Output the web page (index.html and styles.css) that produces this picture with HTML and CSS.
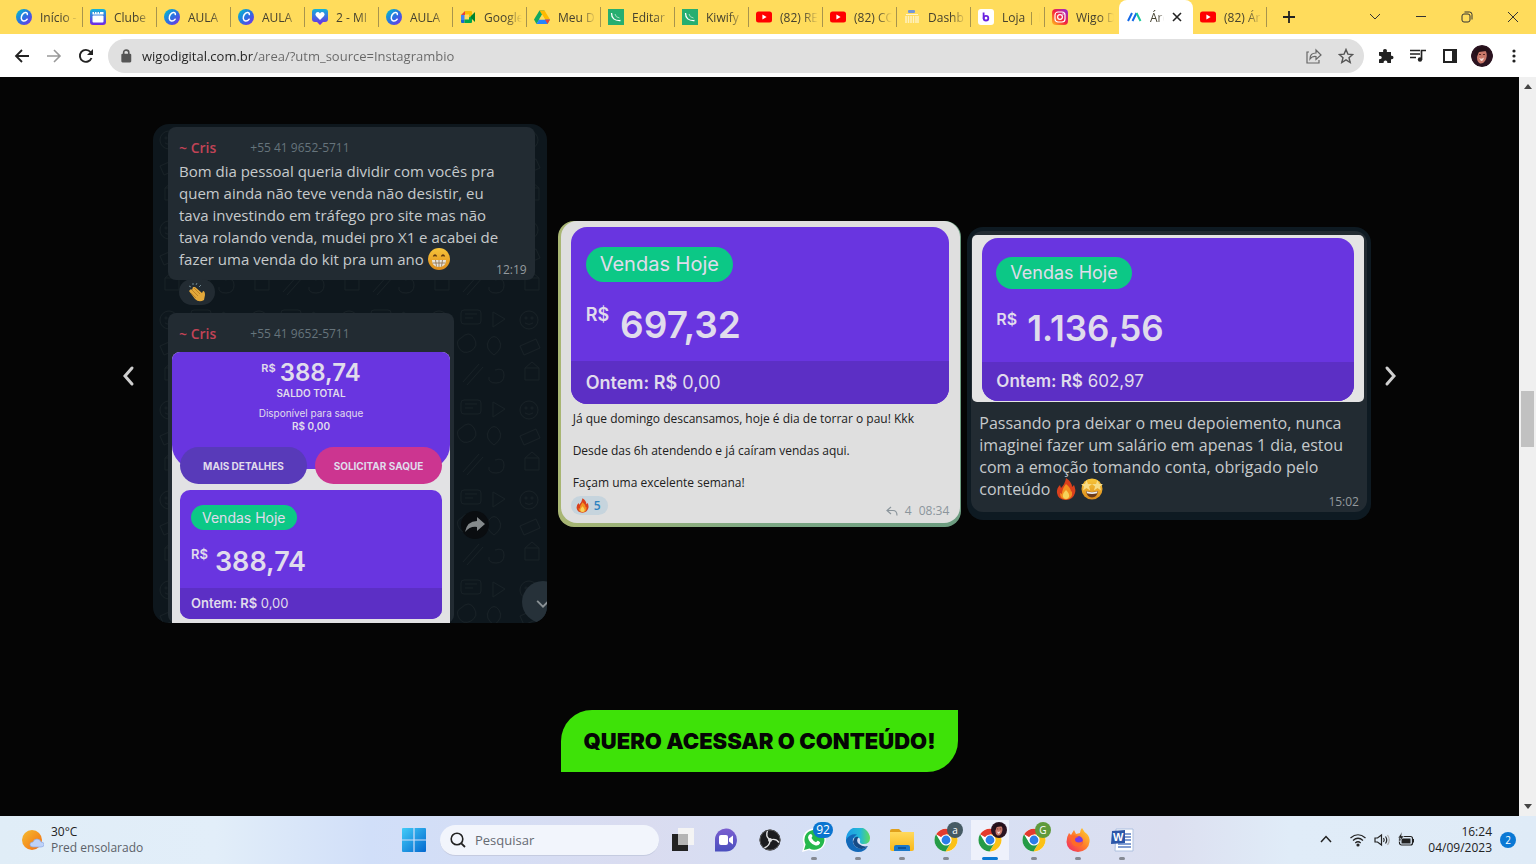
FILE: index.html
```html
<!DOCTYPE html>
<html lang="pt-BR">
<head>
	<meta charset="UTF-8">
	<meta name="viewport" content="width=device-width, initial-scale=1.0">
	<title>Área</title>
	<link rel="stylesheet" href="styles.css">
</head>
<body>
	<!-- Icons -->
	<svg class="sprite" width="0" height="0" aria-hidden="true">
		<defs>
			<linearGradient id="g-canva" x1="0" y1="0" x2="1" y2="1"><stop offset="0" stop-color="#00c4cc"/><stop offset=".5" stop-color="#2a72e0"/><stop offset="1" stop-color="#7d2ae8"/></linearGradient>
			<linearGradient id="g-canva2" x1="0" y1="0" x2="0" y2="1"><stop offset="0" stop-color="#12b5d8"/><stop offset="1" stop-color="#7326e6"/></linearGradient>
			<linearGradient id="g-insta" x1="1" y1="0" x2="0" y2="1"><stop offset="0" stop-color="#8a2bea"/><stop offset=".5" stop-color="#f5203c"/><stop offset="1" stop-color="#ffc11a"/></linearGradient>
			<linearGradient id="g-win" x1="0" y1="0" x2="1" y2="1"><stop offset="0" stop-color="#41ccf8"/><stop offset="1" stop-color="#0468cf"/></linearGradient>
			<linearGradient id="g-edge" x1="0" y1="0" x2="1" y2="0"><stop offset="0" stop-color="#1c9be8"/><stop offset=".6" stop-color="#25b9d6"/><stop offset="1" stop-color="#5fdc5a"/></linearGradient>
			<linearGradient id="g-fox" x1="1" y1="0" x2="0" y2="1"><stop offset="0" stop-color="#ffdf2e"/><stop offset=".5" stop-color="#ff7b2b"/><stop offset="1" stop-color="#f0206a"/></linearGradient>
			<linearGradient id="g-sun" x1="0" y1="0" x2="1" y2="1"><stop offset="0" stop-color="#f5bd30"/><stop offset="1" stop-color="#f36b12"/></linearGradient>
			<linearGradient id="g-face" x1="0" y1="0" x2="0" y2="1"><stop offset="0" stop-color="#f7c53a"/><stop offset="1" stop-color="#dd8c1c"/></linearGradient>
			<linearGradient id="g-meet" x1="0" y1="0" x2="0" y2="1"><stop offset="0" stop-color="#7b5fd0"/><stop offset="1" stop-color="#4a4fbe"/></linearGradient>
			<linearGradient id="g-folder" x1="0" y1="0" x2="0" y2="1"><stop offset="0" stop-color="#ffd95c"/><stop offset="1" stop-color="#f9b81a"/></linearGradient>
			<pattern id="doodles" width="90" height="90" patternUnits="userSpaceOnUse">
				<g fill="none" stroke="#182126" stroke-width="1">
					<circle cx="16" cy="16" r="9"/><circle cx="13" cy="14" r="1"/><circle cx="19" cy="14" r="1"/><path d="M12 19q4 3 8 0"/>
					<rect x="38" y="6" width="20" height="14" rx="3"/><path d="M42 10h12M42 14h8"/>
					<path d="M70 8l12 7-12 8zM7 42l16-7 4 9-16 7zM38 34q8-8 13 0t-3 13q-8 4-12-3t2-10M66 36q5-7 10 0 5 8-5 15-10-7-5-15M12 64h14v12H12zM12 64l7-6 7 6M40 78l16-18M44 81l16-18M72 66q9-3 9 5t-8 8-7-6"/>
				</g>
			</pattern>
		</defs>
		<symbol id="i-canva" viewBox="0 0 16 16"><circle cx="8" cy="8" r="8" fill="url(#g-canva)"/><path d="M11.300 5.600c.3-1.500-.6-2.300-1.900-2.100-2.600.4-4.600 3.500-4.100 6.200.5 2.700 3.600 3.300 5.800.5" fill="none" stroke="#fff" stroke-width="1.500" stroke-linecap="round"/></symbol>
		<symbol id="i-calendar" viewBox="0 0 16 16"><rect width="16" height="16" rx="3" fill="url(#g-canva2)"/><rect x="2.500" y="6.500" width="11" height="7" rx="1" fill="#fff"/><path d="M2.500 3h11v2.500h-11z" fill="#fff"/><path d="M4.500 3v1.500M7 3v1.500M9.500 3v1.500" stroke="#2390d8" stroke-width="1"/></symbol>
		<symbol id="i-heart" viewBox="0 0 16 16"><path d="M3 0h10q3 0 3 3v7q0 3-3 3h-2l-3 3-3-3H3q-3 0-3-3V3q0-3 3-3z" fill="url(#g-canva2)"/><path d="M8 11L4 7q-1.500-2 .3-3.500Q6.500 2.200 8 4.400 9.500 2.200 11.700 3.500 13.500 5 12 7z" fill="#fff"/></symbol>
		<symbol id="i-meet" viewBox="0 0 16 16"><path d="M1 6l4-4v4z" fill="#ea4335"/><path d="M5 2h6v3.500H5z" fill="#fbbc04"/><path d="M1 6h3.500v5H1z" fill="#4285f4"/><path d="M1 11h3.500v3H2q-1 0-1-1z" fill="#1967d2"/><path d="M4.500 10.500H9V8l3-2.500V13q0 1-1 1H4.500z" fill="#00a74a"/><path d="M11 2q1 0 1 1v3.500l-3 2V5.500L11 2z" fill="#fbbc04"/><path d="M11 7l4-4v10l-4-4z" fill="#00832d"/></symbol>
		<symbol id="i-drive" viewBox="0 0 16 16"><path d="M5.500 1.500h5L6 9.500 2.500 15 0 10.500z" fill="#11a861"/><path d="M5.500 1.500h5l5.500 9h-5z" fill="#ffba00"/><path d="M5 10.500h11L13.500 15h-11z" fill="#2684fc"/><path d="M16 10.500L13.500 15 11 10.500z" fill="#ea4335"/><path d="M8 5.500l3 5H5z" fill="#ffdc5c"/></symbol>
		<symbol id="i-kiwify" viewBox="0 0 16 16"><path d="M0 0h16v16H0z" fill="#27ae70"/><path d="M3.500 4q0 8 9 7.500" fill="none" stroke="#fff" stroke-width="1.300"/><path d="M7 5q.5 3.500 4.500 4" fill="none" stroke="#a5dfc3"/></symbol>
		<symbol id="i-youtube" viewBox="0 0 16 16"><rect y="2.500" width="16" height="11" rx="2.500" fill="#f00"/><path d="M6.400 5.600v4.800L10.600 8z" fill="#fff"/></symbol>
		<symbol id="i-dash" viewBox="0 0 16 16"><rect x="4" y="1" width="7" height="3" rx="1" fill="#7396d8"/><path d="M2 5h12v1H2z" fill="#fff4d0"/><path d="M2 7v7M4.500 7v7M7 7v7M9.500 7v7M12 7v7M14 7v7" stroke="#fff2c0" stroke-width="1.500"/></symbol>
		<symbol id="i-loja" viewBox="0 0 16 16"><rect width="16" height="16" rx="3" fill="#fff"/><path d="M5.600 3.500v6.300" stroke="#6a22e0" stroke-width="1.800"/><circle cx="8" cy="9.200" r="2.300" fill="none" stroke="#6a22e0" stroke-width="1.800"/></symbol>
		<symbol id="i-insta" viewBox="0 0 16 16"><rect width="16" height="16" rx="4" fill="url(#g-insta)"/><g fill="none" stroke="#fff" stroke-width="1.200"><rect x="3" y="3" width="10" height="10" rx="3"/><circle cx="8" cy="8" r="2.400"/></g><circle cx="11" cy="5" r=".7" fill="#fff"/></symbol>
		<symbol id="i-wigo" viewBox="0 0 16 16"><path d="M2 12l4-8M6.500 12l4-8" stroke="#1268e8" stroke-width="2"/><path d="M10.500 4l4 8" stroke="#18c99a" stroke-width="2"/></symbol>
		<symbol id="i-face" viewBox="0 0 22 22"><circle cx="11" cy="11" r="11" fill="#2b1320"/><path d="M7 7q4-4 8-.5 2 5-1 9.500-2 3-5 2.500-3-1.500-3-6z" fill="#c9786a"/><path d="M3 8q3-7 10-6 5 1 6 7l-4-3-7 1-2 4z" fill="#241018"/><path d="M8 9.500h2M12 9.500h2" stroke="#5a2a26"/><path d="M8 13q3 1.500 5-.5-1 4-3 3.500z" fill="#f4dcd8"/></symbol>
		<symbol id="i-chrome" viewBox="0 0 24 24"><circle cx="12" cy="12" r="11.500" fill="#fff"/><path d="M12 12L2.100 6.300A11.500 11.500 0 0 1 22 6.500H12z" fill="#e33b2e"/><path d="M12 6.500h10A11.500 11.500 0 0 1 11.500 23.500L17 14.500z" fill="#fbc116"/><path d="M2 6.300A11.500 11.500 0 0 0 11.500 23.500L16.600 15 7.300 15z" fill="#259b47"/><circle cx="12" cy="12" r="5.600" fill="#fff"/><circle cx="12" cy="12" r="4.400" fill="#2b7de9"/></symbol>
		<symbol id="i-fire" viewBox="0 0 20 22"><path d="M10 0q6 4 6 9l2-2q2 5 1 8-2 7-9 7-8 0-9-7-.5-5 3-8l1 3q4-4 5-10z" fill="#d9401c"/><path d="M10 6q5 4 5 8l1-1q1 8-6 8.500Q4 21 4 15l2 1q0-5 4-10z" fill="#f3901f"/><path d="M10 12q4 4 3 7-1 2-3 2t-3-2q-1-3 3-7z" fill="#f6d25a"/></symbol>
		<symbol id="i-grin" viewBox="0 0 22 22"><circle cx="11" cy="11" r="11" fill="url(#g-face)"/><path d="M5.500 8.500q1.500-3 3 0M13.500 8.500q1.500-3 3 0" fill="none" stroke="#5a3510" stroke-width="1.600"/><path d="M4 12h14q0 7-7 7t-7-7z" fill="#e8e4dc"/><path d="M4.600 15h12.800M7.500 12l1 6.500M11 12v7M14.500 12l-1 6.500" stroke="#8b6b45" stroke-width=".8"/></symbol>
		<symbol id="i-star-eyes" viewBox="0 0 22 22"><circle cx="11" cy="11" r="10.500" fill="url(#g-face)"/><path d="M5.500 2l1.500 4h4L8 8.500l1.200 4L5.500 10 2 12.500l1-4L0 6h4zM16.500 2L18 6h4l-3 2.500 1 4-3.500-2.500-3.600 2.500 1.200-4L11 6h4z" fill="#f7dc86"/><path d="M5 13q6 2 12 0-1 6.500-6 6.500T5 13z" fill="#6a3a1a"/><path d="M5.500 13.200q5.500 2 11 0l-.5 2q-5 1.500-10 0z" fill="#eee"/></symbol>
	</svg>

	<!-- Tabs -->
	<header class="browser">
		<div class="tabstrip">
			<nav class="tabs">
				<a class="tab" href="#"><svg><use href="#i-canva"/></svg><span>Início -</span></a>
				<a class="tab" href="#"><svg><use href="#i-calendar"/></svg><span>Clube</span></a>
				<a class="tab" href="#"><svg><use href="#i-canva"/></svg><span>AULA</span></a>
				<a class="tab" href="#"><svg><use href="#i-canva"/></svg><span>AULA</span></a>
				<a class="tab" href="#"><svg><use href="#i-heart"/></svg><span>2 - MI</span></a>
				<a class="tab" href="#"><svg><use href="#i-canva"/></svg><span>AULA</span></a>
				<a class="tab" href="#"><svg><use href="#i-meet"/></svg><span>Google</span></a>
				<a class="tab" href="#"><svg><use href="#i-drive"/></svg><span>Meu D</span></a>
				<a class="tab" href="#"><svg><use href="#i-kiwify"/></svg><span>Editar</span></a>
				<a class="tab" href="#"><svg><use href="#i-kiwify"/></svg><span>Kiwify</span></a>
				<a class="tab" href="#"><svg><use href="#i-youtube"/></svg><span>(82) RE</span></a>
				<a class="tab" href="#"><svg><use href="#i-youtube"/></svg><span>(82) CO</span></a>
				<a class="tab" href="#"><svg><use href="#i-dash"/></svg><span>Dashb</span></a>
				<a class="tab" href="#"><svg><use href="#i-loja"/></svg><span>Loja | E</span></a>
				<a class="tab no-line" href="#"><svg><use href="#i-insta"/></svg><span>Wigo D</span></a>
				<div class="tab active"><svg><use href="#i-wigo"/></svg><span>Área</span><button class="close" aria-label="Fechar"><svg viewBox="0 0 10 10"><path d="M1 1l8 8M9 1L1 9" stroke="#222" stroke-width="1.600"/></svg></button></div>
				<a class="tab" href="#"><svg><use href="#i-youtube"/></svg><span>(82) Ár</span></a>
			</nav>
			<button class="new-tab" aria-label="Nova guia"><svg viewBox="0 0 12 12"><path d="M6 0v12M0 6h12" stroke="#222" stroke-width="1.800"/></svg></button>
			<div class="window-buttons">
				<button aria-label="Pesquisar guias"><svg viewBox="0 0 12 12"><path d="M1 3l5 5 5-5"/></svg></button>
				<button aria-label="Minimizar"><svg viewBox="0 0 12 12"><path d="M1 5.500h10"/></svg></button>
				<button aria-label="Restaurar"><svg viewBox="0 0 12 12"><rect x="1" y="3" width="8" height="8" rx="2"/><path d="M3.500 1h5Q11 1 11 3.500v5"/></svg></button>
				<button aria-label="Fechar janela"><svg viewBox="0 0 12 12"><path d="M1 1l10 10M11 1L1 11"/></svg></button>
			</div>
		</div>

		<div class="toolbar">
			<button aria-label="Voltar"><svg viewBox="0 0 16 16"><path d="M15 8H2M8 2L2 8l6 6" fill="none" stroke="#222" stroke-width="1.800"/></svg></button>
			<button aria-label="Avançar"><svg viewBox="0 0 16 16"><path d="M1 8h13M8 2l6 6-6 6" fill="none" stroke="#999" stroke-width="1.600"/></svg></button>
			<button aria-label="Recarregar"><svg viewBox="0 0 16 16"><path d="M13.500 10A6 6 0 1 1 12.500 4" fill="none" stroke="#222" stroke-width="1.900"/><path d="M15 1v6H9z" fill="#222"/></svg></button>
			<form class="omnibox">
				<svg class="lock" viewBox="0 0 10 12"><rect x="1" y="4" width="8.500" height="7.500" rx="1" fill="#555"/><path d="M3 5V3q0-2 2.200-2t2.200 2v2" fill="none" stroke="#555" stroke-width="1.400"/></svg>
				<input type="text" class="url" aria-label="Endereço" value="wigodigital.com.br/area/?utm_source=Instagrambio">
				<button type="button" aria-label="Compartilhar"><svg viewBox="0 0 16 16" fill="none" stroke="#666" stroke-width="1.200"><path d="M3 4H1v11h12v-3"/><path d="M4 11q0-6 6-6V2l5 5-5 4.500V8.500q-4-.5-6 2.500z"/></svg></button>
				<button type="button" aria-label="Favoritos"><svg viewBox="0 0 16 16"><path d="M8 1.500l1.900 4.600 4.800.4-3.700 3.200 1.200 4.800L8 11.900l-4.200 2.600L5 9.700 1.300 6.500l4.800-.4z" fill="none" stroke="#555" stroke-width="1.400"/></svg></button>
			</form>
			<div class="extensions">
				<button aria-label="Extensões"><svg viewBox="0 0 16 16"><path d="M1 4h4.200q-.7-3 1.800-3t1.800 3H13v3.800q2.500-.5 2.500 1.700T13 11.200V15H9.300q.3-2.600-1.800-2.600T5.600 15H1v-3.800q2.800.2 2.800-1.700T1 7.700z" fill="#222"/></svg></button>
				<button aria-label="Mídia"><svg viewBox="0 0 16 16"><path d="M0 2.500h10M0 6h10M0 9.500h6" stroke="#222" stroke-width="1.700"/><circle cx="10" cy="11.500" r="2.200" fill="#222"/><path d="M11.500 11.500v-9H16" fill="none" stroke="#222" stroke-width="1.700"/></svg></button>
				<button aria-label="Painel lateral"><svg viewBox="0 0 16 16"><path d="M2 2h12v12H2z" fill="none" stroke="#222" stroke-width="2"/><path d="M10 2h4v12h-4z" fill="#222"/></svg></button>
				<button class="profile" aria-label="Perfil"><svg><use href="#i-face"/></svg></button>
				<button aria-label="Menu"><svg viewBox="0 0 16 16" fill="#222"><circle cx="8" cy="3" r="1.600"/><circle cx="8" cy="8" r="1.600"/><circle cx="8" cy="13" r="1.600"/></svg></button>
			</div>
		</div>
	</header>

	<div class="viewport">
		<main class="page">
			<!-- Depoimentos -->
			<section class="carousel">
				<button class="arrow" aria-label="Anterior"><svg viewBox="0 0 14 22"><path d="M11 3L4 11l7 8"/></svg></button>
				<div class="slides">
					<article class="slide chat-a">
						<svg class="doodle"><rect width="100%" height="100%" fill="url(#doodles)"/></svg>
						<div class="bubble">
							<p class="sender"><b>~ Cris</b><span>+55 41 9652-5711</span></p>
							<p class="message">Bom dia pessoal queria dividir com vocês pra<br>quem ainda não teve venda não desistir, eu<br>tava investindo em tráfego pro site mas não<br>tava rolando venda, mudei pro X1 e acabei de<br>fazer uma venda do kit pra um ano <svg class="emoji"><use href="#i-grin"/></svg></p>
							<time>12:19</time>
						</div>
						<div class="reaction"><svg viewBox="0 0 20 20"><path d="M2 9l2-2 1 1 1-3 2 0 7 6 1-2q2 0 2 4l-1 5q-5 3-9-1z" fill="#e3a83a"/><path d="M5 8l6 6M7 6l6 6M4 11l5 5" stroke="#b67a20" stroke-width=".8"/><path d="M2 4l2 1M6 1v2M10 1L9 3M14 3l-2 2" stroke="#6f8790"/></svg></div>
						<div class="bubble photo">
							<p class="sender"><b>~ Cris</b><span>+55 41 9652-5711</span></p>
							<div class="app">
								<div class="balance">
									<p class="total"><sup>R$</sup>388,74</p>
									<p class="caption">SALDO TOTAL</p>
									<p class="available">Disponível para saque</p>
									<p class="caption">R$ 0,00</p>
								</div>
								<div class="app-buttons">
									<button>MAIS DETALHES</button>
									<button class="pink">SOLICITAR SAQUE</button>
								</div>
								<div class="sales small">
									<span class="pill">Vendas Hoje</span>
									<p class="amount"><sup>R$</sup>388,74</p>
									<p class="yesterday"><b>Ontem: R$</b> 0,00</p>
								</div>
							</div>
						</div>
						<button class="forward" aria-label="Encaminhar"><svg viewBox="0 0 20 16"><path d="M0 15Q2 4 12 4V0l8 7-8 7v-4Q5 9 0 15z" fill="#858a8c"/></svg></button>
						<button class="scroll-down" aria-label="Descer"><svg viewBox="0 0 12 12"><path d="M1 5l5 5 5-5" fill="none" stroke="#8b9296" stroke-width="1.600"/></svg></button>
					</article>

					<article class="slide chat-b">
						<div class="paper">
							<div class="sales large">
								<span class="pill">Vendas Hoje</span>
								<p class="amount"><sup>R$</sup>697,32</p>
								<p class="yesterday"><b>Ontem: R$</b> 0,00</p>
							</div>
							<p class="note">Já que domingo descansamos, hoje é dia de torrar o pau! Kkk<br><br>Desde das 6h atendendo e já caíram vendas aqui.<br><br>Façam uma excelente semana!</p>
							<div class="note-foot">
								<span class="likes"><svg><use href="#i-fire"/></svg>5</span>
								<span class="meta"><svg viewBox="0 0 12 10"><path d="M5 1L1 4.500 5 8M1 4.500h6q4 0 4 5" fill="none" stroke="#8b959c" stroke-width="1.200"/></svg>4 <time>08:34</time></span>
							</div>
						</div>
					</article>

					<article class="slide chat-c">
						<div class="bubble">
							<div class="shot">
								<div class="sales medium">
									<span class="pill">Vendas Hoje</span>
									<p class="amount"><sup>R$</sup>1.136,56</p>
									<p class="yesterday"><b>Ontem: R$</b> 602,97</p>
								</div>
							</div>
							<p class="message">Passando pra deixar o meu depoiemento, nunca<br>imaginei fazer um salário em apenas 1 dia, estou<br>com a emoção tomando conta, obrigado pelo<br>conteúdo <svg class="emoji"><use href="#i-fire"/></svg> <svg class="emoji"><use href="#i-star-eyes"/></svg></p>
							<time>15:02</time>
						</div>
					</article>
				</div>
				<button class="arrow" aria-label="Próximo"><svg viewBox="0 0 14 22"><path d="M3 3l7 8-7 8"/></svg></button>
			</section>

			<a class="cta" href="#">QUERO ACESSAR O CONTEÚDO!</a>
		</main>
		<div class="scrollbar">
			<svg viewBox="0 0 8 5"><path d="M0 5l4-5 4 5z"/></svg>
			<span class="thumb"></span>
			<svg viewBox="0 0 8 5"><path d="M0 0l4 5 4-5z"/></svg>
		</div>
	</div>

	<!-- Barra de tarefas -->
	<footer class="taskbar">
		<div class="weather">
			<svg viewBox="0 0 22 22"><circle cx="10" cy="11" r="10" fill="url(#g-sun)"/><path d="M11 18q-3 0-3-2.500T11 13q1-3 4-3t4 3q3 0 3 2.500T19 18z" fill="#bed2f8" stroke="#8ea9e6" stroke-width=".7"/></svg>
			<p>30°C<br><span>Pred ensolarado</span></p>
		</div>
		<div class="apps">
			<button class="app-icon" aria-label="Iniciar"><svg viewBox="0 0 24 24"><path d="M0 1q0-1 1-1h10.400v11.400H0zM12.600 0H23q1 0 1 1v10.400H12.600zM0 12.600h11.400V24H1q-1 0-1-1zM12.600 12.600H24V23q0 1-1 1H12.600z" fill="url(#g-win)"/></svg></button>
			<label class="search"><svg viewBox="0 0 16 16"><circle cx="7" cy="7" r="5.800" fill="none" stroke="#222" stroke-width="1.600"/><path d="M11.300 11.300L15 15" stroke="#222" stroke-width="1.800"/></svg><input type="text" placeholder="Pesquisar" aria-label="Pesquisar"></label>
			<button class="app-icon" aria-label="Visão de tarefas"><svg viewBox="0 0 24 24"><path d="M8 0h16v17H8z" fill="#f4f4f4"/><path d="M2 6h16v17H2z" fill="#222"/><path d="M8 6h10v11H8z" fill="#b5b5b5"/></svg></button>
			<button class="app-icon" aria-label="Chat"><svg viewBox="0 0 24 24"><path d="M1 23.500V11A11 11.500 0 1 1 12 23.500z" fill="url(#g-meet)"/><rect x="5" y="7" width="9" height="10" rx="2" fill="#fff"/><path d="M15 10.500l4-3v9l-4-3z" fill="#fff"/></svg></button>
			<button class="app-icon" aria-label="OBS"><svg viewBox="0 0 24 24"><circle cx="12" cy="12" r="10.500" fill="#1c1c1e"/><path d="M12 12Q7 8 9.500 3M12 12q6-2 9 2.500M12 12q0 6-6 8" fill="none" stroke="#e4e4e4" stroke-width="1.400"/><circle cx="12" cy="12" r="2" fill="#ddd"/><circle cx="12" cy="12" r="10" fill="none" stroke="#555"/></svg></button>
			<button class="app-icon open" aria-label="WhatsApp"><svg viewBox="0 0 24 24"><path d="M0 24l2-7A11.500 11.500 0 1 1 7 22z" fill="#fff"/><path d="M2 22l1.600-5.500A10 10 0 1 1 7.500 20.500z" fill="#25b84c"/><path d="M7.500 6.500q2-1.500 3 1.500l-1 2q1.500 3 4.500 4.200l1.600-1.500q3 1 2.400 2.600-1.500 3-5 2Q7 15 6 9.500q.2-2 1.500-3z" fill="#fff"/></svg><span class="badge blue">92</span></button>
			<button class="app-icon open" aria-label="Edge"><svg viewBox="0 0 24 24"><path d="M0 12A12 12 0 0 1 24 10q0 6-6.500 6-4 0-3.500-3 1-3-2.500-3.500Q5 9 3 16q-3 0-3-4z" fill="url(#g-edge)"/><path d="M0 12q4-7 11-5.500-5.500 3-4 8.500 2.500 6 10 5.500 3-.5 5-2.500-3 6-10 6Q1 23.500 0 12z" fill="#1268b8"/><path d="M7 14q1-6 5.500-5-3 4 .5 7 4 3.500 9 2-4 4-9 2.500-5-2-6-6.500z" fill="#164a86"/></svg></button>
			<button class="app-icon open" aria-label="Explorador"><svg viewBox="0 0 24 24"><path d="M0 3q0-2 2-2h7l3 3H0z" fill="#e0a01c"/><path d="M0 4h24v17q0 2-2 2H2q-2 0-2-2z" fill="url(#g-folder)"/><path d="M4 23v-4q0-2 2-2h12q2 0 2 2v4z" fill="#1a78ca"/><path d="M8 20h8" stroke="#0b4a8c" stroke-width="1.600"/></svg></button>
			<button class="app-icon open" aria-label="Chrome a"><svg><use href="#i-chrome"/></svg><span class="badge slate">a</span></button>
			<button class="app-icon open current" aria-label="Chrome"><svg><use href="#i-chrome"/></svg><span class="badge"><svg><use href="#i-face"/></svg></span></button>
			<button class="app-icon open" aria-label="Chrome G"><svg><use href="#i-chrome"/></svg><span class="badge green">G</span></button>
			<button class="app-icon open" aria-label="Firefox"><svg viewBox="0 0 24 24"><path d="M3 5l2 2 3-5 2 4 4-1q0-3 2-5 2 4 5 6 3 3 2.500 8-1 9-11.500 10Q1 23 .5 14 .5 9 3 5z" fill="url(#g-fox)"/><circle cx="12" cy="13" r="5" fill="#7a3be2"/><path d="M5 8q4-2 8 1-4 0-4 2.500 0 3 4 3 3 0 4-2 0 6-6 6Q4 18 5 8z" fill="#ff6a28"/></svg></button>
			<button class="app-icon open" aria-label="Word"><svg viewBox="0 0 24 24"><path d="M6 1h17v22H5z" fill="#fff" stroke="#adc0e0"/><path d="M15 6h6M15 9h6M15 12h6M8 16h13M8 19h13" stroke="#5b7fc4" stroke-width="1.300"/><path d="M2 3l13-1v13L1 16z" fill="#2b56a8"/><text x="3" y="13" class="word">W</text></svg></button>
		</div>
		<div class="tray">
			<svg class="chevron" viewBox="0 0 16 16"><path d="M3 10l5-5.500 5 5.500" fill="none" stroke="#222" stroke-width="1.500"/></svg>
			<svg viewBox="0 0 16 16" fill="none" stroke="#222" stroke-width="1.200"><path d="M.5 6Q8-.5 15.500 6M3 8.500q5-4.500 10 0M5.300 11q2.700-2.500 5.400 0"/><circle cx="8" cy="13" r="1" fill="#222"/></svg>
			<svg viewBox="0 0 16 16" fill="none" stroke="#222" stroke-width="1.200"><path d="M1 6h2.500L7.500 3v10l-4-3H1zM9.500 6q1.500 2 0 4M11.500 4.500q2.500 3.500 0 7"/><path d="M13.500 3q3.500 5 0 10" stroke="#aaa"/></svg>
			<svg viewBox="0 0 16 16"><rect x="1.500" y="4.500" width="13" height="8.500" rx="2" fill="none" stroke="#222" stroke-width="1.200"/><path d="M3.500 6.500h9v5h-9zM14.500 7H16v3.500h-1.500z" fill="#222"/><path d="M4 0L0 6h2.500L1.500 10 6 4H3.500z" fill="#222" stroke="#dfebf7" stroke-width=".5"/></svg>
			<p class="clock">16:24<br>04/09/2023</p>
			<span class="notifications">2</span>
		</div>
	</footer>
</body>
</html>
```

FILE: styles.css
```css
* {
	box-sizing: border-box;
}
body {
	margin: 0;
	min-height: 100vh;
	display: flex;
	flex-direction: column;
	font-family: "Open Sans", "Noto Sans", sans-serif;
	font-size: 12px;
	color: #222;
}
p {
	margin: 0;
}
button {
	border: 0;
	padding: 0;
	background: none;
	font: inherit;
	color: inherit;
}
a {
	color: inherit;
	text-decoration: none;
}
svg {
	display: block;
	flex: none;
}
.sprite {
	position: absolute;
}

/* tabs */
.tabstrip {
	display: flex;
	align-items: center;
	height: 34px;
	padding-left: 9px;
	background: #ffdc5c;
}
.tabs {
	display: flex;
	height: 34px;
}
.tab {
	position: relative;
	display: flex;
	align-items: center;
	gap: 8px;
	width: 74px;
	padding: 0 5px 0 7px;
	color: #45412f;
}
.tab::after {
	content: "";
	position: absolute;
	right: 0;
	top: 7px;
	width: 1px;
	height: 20px;
	background: #a8944d;
}
.tab.no-line::after, .tab.active::after {
	display: none;
}
.tab > svg {
	width: 16px;
	height: 16px;
}
.tab > span {
	flex: 1;
	min-width: 0;
	overflow: hidden;
	white-space: nowrap;
	-webkit-mask-image: linear-gradient(to right, #000 60%, transparent);
	mask-image: linear-gradient(to right, #000 60%, transparent);
}
.tab.active {
	background: #fff;
	border-radius: 8px 8px 0 0;
	padding-right: 11px;
}
.close svg {
	width: 10px;
	height: 10px;
}
.new-tab {
	margin-left: 16px;
}
.new-tab svg {
	width: 12px;
	height: 12px;
}
.window-buttons {
	display: flex;
	margin-left: auto;
}
.window-buttons button {
	width: 46px;
	height: 30px;
	display: grid;
	place-items: center;
}
.window-buttons svg {
	width: 12px;
	height: 12px;
	fill: none;
	stroke: #333;
}

/* toolbar */
.toolbar {
	display: flex;
	align-items: center;
	height: 43px;
	padding: 0 6px;
	background: #fff;
}
.toolbar button {
	width: 32px;
	height: 32px;
	display: grid;
	place-items: center;
}
.toolbar button svg {
	width: 16px;
	height: 16px;
}
.omnibox {
	flex: 1;
	display: flex;
	align-items: center;
	height: 34px;
	margin: 0 6px;
	padding: 0 2px 0 12px;
	background: #e0e0e0;
	border-radius: 17px;
}
.lock {
	width: 12px;
	height: 14px;
}
.url {
	flex: 1;
	min-width: 0;
	margin-left: 10px;
	padding: 0;
	border: 0;
	outline: 0;
	font: 13px "Open Sans", "Noto Sans", sans-serif;
	color: transparent;
	background: linear-gradient(to right, #222 112px, #666 112px);
	-webkit-background-clip: text;
	background-clip: text;
}
.extensions {
	display: flex;
}
.extensions .profile svg {
	width: 22px;
	height: 22px;
	border-radius: 50%;
}

/* page */
.viewport {
	flex: 1;
	display: flex;
	background: #050505;
}
.page {
	flex: 1;
	display: flex;
	flex-direction: column;
	align-items: center;
	padding: 47px 108px 40px;
}
.scrollbar {
	width: 17px;
	display: flex;
	flex-direction: column;
	align-items: center;
	justify-content: space-between;
	padding: 7px 0;
	background: #f0f0f0;
}
.scrollbar svg {
	width: 8px;
	height: 5px;
	fill: #444;
}
.thumb {
	width: 13px;
	height: 56px;
	margin-top: -56px;
	background: #c1c1c1;
}
.carousel {
	display: flex;
	align-items: center;
	width: 100%;
}
.arrow {
	width: 40px;
	height: 40px;
	padding-top: 4px;
	display: grid;
	place-items: center;
}
.arrow svg {
	width: 14px;
	height: 22px;
	fill: none;
	stroke: #cfcfcf;
	stroke-width: 3;
	stroke-linecap: round;
}
.slides {
	flex: 1;
	display: grid;
	grid-template-columns: repeat(3, 1fr);
	align-items: center;
	gap: 6px;
}
.slide {
	position: relative;
	overflow: hidden;
	border-radius: 16px;
}
.bubble {
	position: relative;
	background: #222b32;
	border-radius: 8px;
}
.bubble > time {
	position: absolute;
	right: 8px;
	bottom: 2px;
	color: #949a9e;
}
.message {
	font-size: 16px;
	line-height: 22px;
	color: #c6cacc;
	white-space: nowrap;
}
.emoji {
	display: inline-block;
	width: 22px;
	height: 22px;
	vertical-align: -5px;
}
.sender {
	display: flex;
	align-items: center;
	gap: 34px;
	height: 38px;
	padding: 0 11px;
	color: #66747c;
}
.sender b {
	font-size: 14px;
	font-weight: 600;
	color: #c14356;
}

.chat-a {
	margin: 0 5px;
	height: 499px;
	padding: 3px 12px 0 15px;
	background: #0e171d;
}
.doodle {
	position: absolute;
	inset: 0;
	width: 100%;
	height: 100%;
}
.chat-a .sender {
	padding-top: 3px;
}
.chat-a .message {
	padding: 0 0 10px 11px;
	margin-top: -5px;
	font-size: 15px;
	font-weight: 500;
}
.chat-a .bubble:not(.photo) {
	height: 153px;
}
.reaction {
	position: relative;
	width: 36px;
	height: 26px;
	display: grid;
	place-items: center;
	margin: -1px 0 8px 11px;
	border-radius: 13px;
	background: #222b32;
}
.reaction svg {
	width: 20px;
	height: 20px;
}
.photo {
	width: 286px;
	padding: 0 4px;
}
.photo .sender {
	height: 39px;
	padding: 2px 7px 0;
}
.forward {
	position: absolute;
	left: 308px;
	top: 387px;
	width: 28px;
	height: 28px;
	display: grid;
	place-items: center;
	border-radius: 50%;
	background: #0a0d10;
}
.forward svg {
	width: 20px;
	height: 16px;
}
.scroll-down {
	position: absolute;
	right: -17px;
	bottom: 0;
	width: 42px;
	height: 42px;
	display: grid;
	place-items: center;
	border-radius: 50%;
	background: #263139;
}
.scroll-down svg {
	width: 14px;
	height: 14px;
}

/* kiwify app */
.app, .sales {
	font-family: Inter, "Liberation Sans", sans-serif;
	color: #e0dcec;
}
.app {
	background: #e2e2e4;
	border-radius: 8px 8px 0 0;
	height: 271px;
}
.balance {
	height: 117px;
	padding-top: 8px;
	text-align: center;
	background: #6935e0;
	border-radius: 8px 8px 24px 24px;
}
.total {
	font-size: 24px;
	line-height: 26px;
	font-weight: 600;
}
.total sup {
	margin-right: 4px;
	font-size: 11px;
	line-height: 11px;
}
.caption, .available {
	font-size: 10px;
	line-height: 13px;
	font-weight: 600;
}
.total + .caption {
	margin-top: 1px;
}
.available {
	margin-top: 7px;
	font-size: 10px;
	font-weight: 400;
}
.app-buttons {
	position: relative;
	display: grid;
	grid-template-columns: 1fr 1fr;
	gap: 8px;
	margin: -22px 8px 6px;
}
.app-buttons button {
	height: 37px;
	border-radius: 19px;
	background: #583ab9;
	font-size: 10px;
	font-weight: 700;
}
.app-buttons .pink {
	background: #cc3590;
}
.sales {
	display: flex;
	flex-direction: column;
	align-items: flex-start;
	overflow: hidden;
	border-radius: 16px;
	background: #6935e0;
}
.pill {
	background: #0cc886;
	border-radius: 18px;
}
.amount {
	display: flex;
	font-weight: 600;
	line-height: 1;
}
.yesterday {
	width: 100%;
	margin-top: auto;
	background: #5c2fc5;
}
.sales b {
	font-weight: 600;
}
.small {
	height: 129px;
	margin: 0 8px;
	border-radius: 10px;
	padding-top: 15px;
}
.small .pill {
	margin: 0 0 18px 11px;
	padding: 0 11px;
	font-size: 14px;
	line-height: 25px;
}
.small .amount {
	padding-left: 11px;
	gap: 7px;
	font-size: 27px;
}
.small sup {
	font-size: 13px;
}
.small .yesterday {
	padding-left: 11px;
	font-size: 13px;
	line-height: 31px;
}
.medium {
	height: 163px;
	padding-top: 19px;
}
.medium .pill {
	margin: 0 0 22px 14px;
	padding: 0 14px;
	font-size: 18px;
	line-height: 32px;
}
.medium .amount {
	padding-left: 14px;
	gap: 10px;
	font-size: 35px;
}
.medium sup {
	font-size: 16px;
}
.medium .yesterday {
	padding-left: 14px;
	font-size: 17px;
	line-height: 39px;
}
.large {
	height: 177px;
	padding-top: 20px;
}
.large .pill {
	margin: 0 0 24px 15px;
	padding: 0 14px;
	font-size: 20px;
	line-height: 35px;
}
.large .amount {
	padding-left: 15px;
	gap: 11px;
	font-size: 37px;
}
.large sup {
	font-size: 18px;
}
.large .yesterday {
	padding-left: 15px;
	font-size: 18px;
	line-height: 43px;
}

.chat-b {
	padding: 0 1px 4px 3px;
	background: linear-gradient(to right, #a9b673, #7ca884 50%, #6c9c80);
}
.paper {
	padding: 6px 11px 4px 10px;
	background: #dfdfdf;
	border-radius: 16px;
}
.note {
	padding: 7px 2px 0;
	font-size: 12px;
	line-height: 16px;
	white-space: nowrap;
	color: #202020;
}
.note-foot {
	display: flex;
	align-items: flex-end;
	justify-content: space-between;
	margin-top: 6px;
	height: 22px;
}
.likes {
	display: flex;
	align-items: center;
	gap: 5px;
	height: 19px;
	margin-bottom: 4px;
	padding: 0 7px 0 5px;
	border-radius: 10px;
	background: #c6d4dd;
	color: #2c82c0;
	font-weight: 600;
}
.likes svg {
	width: 13px;
	height: 15px;
}
.meta {
	display: flex;
	align-items: center;
	gap: 7px;
	height: 16px;
	color: #8b959c;
}
.meta svg {
	width: 12px;
	height: 10px;
}

.chat-c {
	padding: 4px 4px 8px 4px;
	background: #0e1a22;
}
.chat-c .bubble {
	padding: 4px 3px 12px 1px;
	border-radius: 12px;
}
.shot {
	padding: 3px 10px 1px;
	background: #e4e4e4;
	border-radius: 5px;
}
.chat-c .message {
	padding: 10px 0 0 7px;
}

.cta {
	margin-top: 87px;
	padding: 0 22px;
	border-radius: 31px 0;
	background: #3ee208;
	color: #050505;
	font: 900 22px/62px Inter, "Liberation Sans", sans-serif;
}

/* taskbar */
.taskbar {
	display: grid;
	grid-template-columns: 1fr auto 1fr;
	align-items: center;
	height: 48px;
	background: linear-gradient(to right, #e0edf7, #e2eef9 14%, #d1dff9 24%, #dadcf0 42%, #d4e0f6 55%, #dcdff0 76%, #e0ecf8 84%, #dfebf7);
}
.weather {
	display: flex;
	align-items: center;
	gap: 7px;
	padding-left: 22px;
	line-height: 16px;
}
.weather svg {
	width: 22px;
	height: 22px;
}
.weather span {
	color: #5b6168;
}
.apps {
	display: flex;
	align-items: center;
}
.app-icon {
	position: relative;
	width: 44px;
	height: 40px;
	display: grid;
	place-items: center;
}
.app-icon > svg {
	width: 24px;
	height: 24px;
}
.open::after {
	content: "";
	position: absolute;
	bottom: 0;
	left: 19px;
	width: 6px;
	height: 3px;
	border-radius: 2px;
	background: #858993;
}
.current {
	background: linear-gradient(#eef1fb, #eef1fb) center / 38px 40px no-repeat;
}
.current::after {
	left: 14px;
	width: 16px;
	background: #0a78d4;
}
.badge {
	position: absolute;
	top: 2px;
	right: 5px;
	width: 16px;
	height: 16px;
	border-radius: 50%;
	color: #fff;
	font-size: 10px;
	line-height: 16px;
	text-align: center;
}
.badge svg {
	width: 16px;
	height: 16px;
}
.blue {
	right: 3px;
	width: 20px;
	background: #0a74d0;
	border-radius: 8px;
	font-size: 12px;
}
.slate {
	background: #455a64;
}
.green {
	background: #5f9a3c;
}
.word {
	font: bold 11px "Liberation Sans", sans-serif;
	fill: #fff;
}
.search {
	display: flex;
	align-items: center;
	gap: 9px;
	width: 219px;
	height: 31px;
	margin: 0 1px 0 4px;
	padding: 0 10px;
	border-radius: 16px;
	background: #f2f5fc;
	border-bottom: 1px solid #c5cbe0;
}
.search svg {
	width: 16px;
	height: 16px;
}
.search input {
	min-width: 0;
	padding: 0;
	border: 0;
	background: none;
	font: 13px "Open Sans", "Noto Sans", sans-serif;
}
.search input::placeholder {
	color: #656a72;
}
.tray {
	display: flex;
	align-items: center;
	justify-content: flex-end;
	gap: 8px;
	padding-right: 20px;
}
.tray svg {
	width: 16px;
	height: 16px;
}
.tray .chevron {
	margin-right: 8px;
}
.clock {
	margin-left: 6px;
	text-align: right;
	line-height: 16px;
}
.notifications {
	width: 16px;
	height: 16px;
	border-radius: 50%;
	background: #0a78d4;
	color: #fff;
	font-size: 10px;
	line-height: 16px;
	text-align: center;
}
```
